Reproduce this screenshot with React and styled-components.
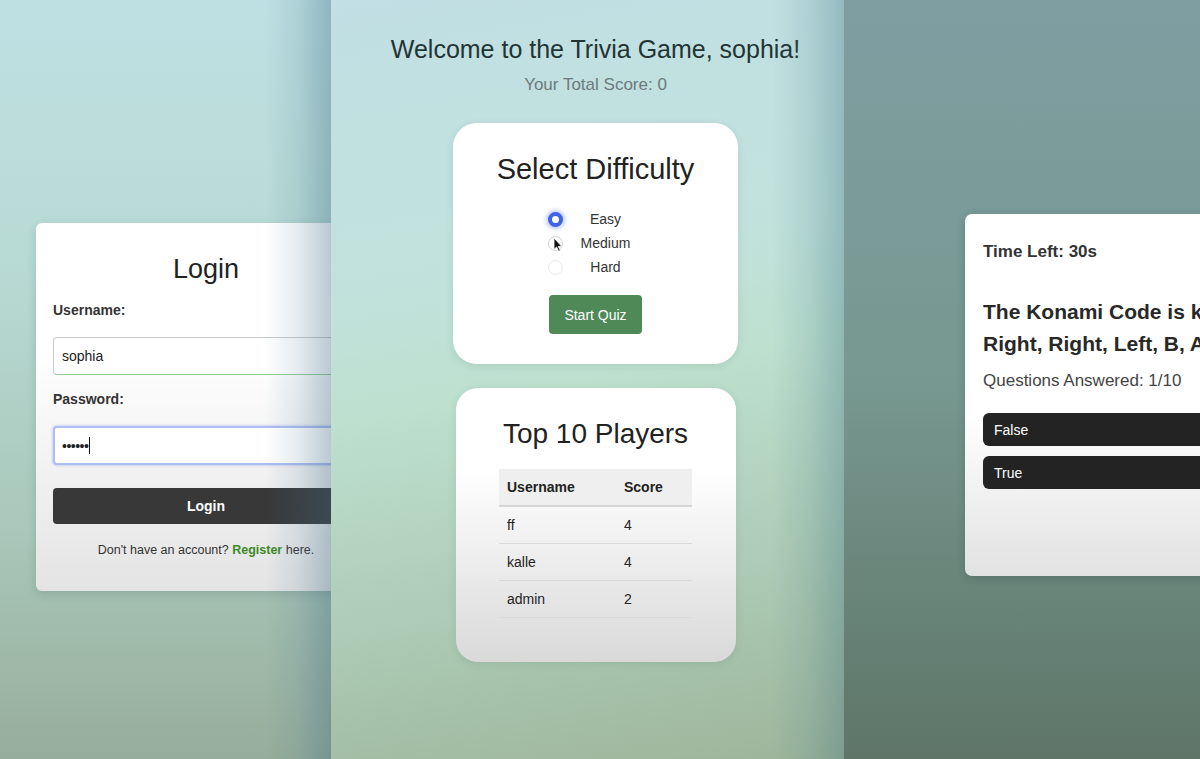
import React from "react";
import styled, { createGlobalStyle, css } from "styled-components";

const GlobalStyle = createGlobalStyle`
  html, body { margin: 0; padding: 0; }
  body {
    font-family: "Liberation Sans", Arial, Helvetica, sans-serif;
    background: #8aa9a6;
  }
  * { box-sizing: border-box; }
`;

const Stage = styled.div`
  display: flex;
  width: 1200px;
  height: 759px;
  overflow: hidden;
`;

const Panel = styled.section`
  position: relative;
  flex: 0 0 ${(p) => p.$width}px;
  height: 100%;
  overflow: hidden;
  display: flex;
  background: ${(p) => p.$bg};
  &::after {
    content: "";
    position: absolute;
    inset: 0;
    pointer-events: none;
    background: ${(p) => p.$shade || "none"};
  }
`;

const LoginPanel = styled(Panel)`
  align-items: flex-start;
  padding: 223px 0 0 36px;
`;

const GamePanel = styled(Panel)`
  flex-direction: column;
  align-items: center;
  padding: 34px 0 0 16px;
`;

const QuizPanel = styled(Panel)`
  align-items: flex-start;
  padding: 214px 0 0 121px;
`;

/* ---------- Login ---------- */
const LoginCard = styled.div`
  flex: 0 0 340px;
  display: flex;
  flex-direction: column;
  padding: 30px 17px 33px;
  border-radius: 6px;
  background: linear-gradient(180deg, #ffffff 35%, #e4e4e4 100%);
  box-shadow: 0 3px 10px rgba(40, 70, 70, 0.18);
`;

const CardTitle = styled.h1`
  margin: 0;
  font-size: ${(p) => p.$size}px;
  line-height: ${(p) => p.$lh}px;
  font-weight: 400;
  color: #222;
  text-align: center;
  white-space: nowrap;
`;

const FieldLabel = styled.div`
  margin-top: ${(p) => p.$top}px;
  font-size: 14px;
  line-height: 17px;
  font-weight: 700;
  color: #333;
`;

const TextField = styled.div`
  margin-top: 18px;
  height: ${(p) => (p.$focused ? 39 : 38)}px;
  display: flex;
  align-items: center;
  padding: 0 8px;
  font-size: 14px;
  color: #222;
  border-radius: 4px;
  background: #fff;
  ${(p) =>
    p.$focused
      ? css`
          border: 2px solid #aebdf2;
          padding-left: 7px;
          box-shadow: 0 0 3px rgba(120, 145, 235, 0.6);
        `
      : css`
          border: 1px solid #cacaca;
          border-bottom-color: #93cf93;
        `}
`;

const Dots = styled.span`
  font-size: 14px;
  letter-spacing: -0.5px;
  line-height: 1;
`;

const Caret = styled.span`
  display: inline-block;
  width: 1px;
  height: 17px;
  margin-left: 1px;
  background: #111;
`;

const DarkButton = styled.div`
  margin-top: 23px;
  height: 36px;
  display: flex;
  align-items: center;
  justify-content: center;
  border-radius: 4px;
  background: #383838;
  color: #fff;
  font-size: 14px;
  font-weight: 700;
`;

const FooterText = styled.p`
  margin: 18px 0 0;
  font-size: 12.5px;
  line-height: 16px;
  color: #333;
  text-align: center;
`;

const RegisterLink = styled.span`
  color: #3b8a25;
  font-weight: 700;
`;

/* ---------- Game ---------- */
const Welcome = styled.h1`
  margin: 0;
  font-size: 25px;
  line-height: 30px;
  font-weight: 400;
  color: #233434;
  white-space: nowrap;
`;

const ScoreText = styled.p`
  margin: 11px 0 0;
  font-size: 17px;
  line-height: 20px;
  color: #6b7b7b;
`;

const WhiteCard = styled.div`
  width: ${(p) => p.$width}px;
  margin-top: ${(p) => p.$top}px;
  display: flex;
  flex-direction: column;
  align-items: center;
  border-radius: ${(p) => p.$radius}px;
  padding: ${(p) => p.$pad};
  background: ${(p) => p.$bg};
  box-shadow: 0 2px 8px rgba(30, 60, 60, 0.1);
`;

const RadioList = styled.div`
  margin-top: 21px;
  display: flex;
  flex-direction: column;
`;

const RadioRow = styled.div`
  position: relative;
  display: flex;
  align-items: center;
  height: 24px;
  gap: 5px;
`;

const RadioDot = styled.span`
  flex: 0 0 15px;
  width: 15px;
  height: 15px;
  border-radius: 50%;
  ${(p) =>
    p.$checked
      ? css`
          background: #fff;
          border: 4px solid #3f63e6;
          box-shadow: 0 0 4px 2px rgba(90, 120, 240, 0.4);
        `
      : css`
          background: #fff;
          border: 1px solid ${p.$hover ? "#d2d2d2" : "#e8e8e8"};
        `}
`;

const RadioLabel = styled.span`
  width: 76px;
  text-align: center;
  font-size: 14px;
  line-height: 17px;
  color: #333;
`;

const Pointer = styled.svg`
  position: absolute;
  left: 5px;
  top: 6px;
  width: 10px;
  height: 15px;
`;

const StartButton = styled.div`
  margin-top: 16px;
  width: 93px;
  height: 39px;
  display: flex;
  align-items: center;
  justify-content: center;
  border-radius: 4px;
  background: #4e8957;
  color: #fff;
  font-size: 14px;
`;

const Table = styled.table`
  margin-top: 19px;
  width: 193px;
  border-collapse: collapse;
  font-size: 14px;
  color: #222;
`;

const HeadCell = styled.th`
  height: 37px;
  padding: 0 8px;
  text-align: left;
  font-weight: 700;
  background: #efefef;
  border-bottom: 2px solid #d5d5d5;
  width: ${(p) => p.$w || "auto"};
`;

const Cell = styled.td`
  height: 37px;
  padding: 0 8px;
  border-bottom: 1px solid #dadada;
`;

/* ---------- Quiz ---------- */
const QuizCard = styled.div`
  flex: 0 0 600px;
  display: flex;
  flex-direction: column;
  padding: 28px 18px 87px;
  border-radius: 7px;
  background: linear-gradient(180deg, #ffffff 55%, #e2e2e2 100%);
  box-shadow: 0 2px 8px rgba(20, 40, 40, 0.2);
`;

const TimeLeft = styled.div`
  font-size: 17px;
  line-height: 20px;
  font-weight: 700;
  color: #333;
`;

const Question = styled.h2`
  margin: 34px 0 0;
  font-size: 21px;
  line-height: 32px;
  font-weight: 700;
  color: #282828;
  white-space: nowrap;
`;

const Progress = styled.p`
  margin: 11px 0 0;
  font-size: 17px;
  line-height: 20px;
  color: #444;
`;

const AnswerButton = styled.div`
  margin-top: ${(p) => p.$top}px;
  height: 33px;
  display: flex;
  align-items: center;
  padding-left: 11px;
  border-radius: 6px;
  background: #232323;
  color: #fff;
  font-size: 14px;
`;

const players = [
  { name: "ff", score: 4 },
  { name: "kalle", score: 4 },
  { name: "admin", score: 2 },
];

export default function App() {
  return (
    <>
      <GlobalStyle />
      <Stage>
        <LoginPanel
          $width={331}
          $bg="linear-gradient(180deg, #bfe0e3 0%, #b8dad4 35%, #a9c7ba 70%, #97ad9b 100%)"
          $shade="linear-gradient(90deg, rgba(80,125,150,0) 0%, rgba(80,125,150,0) 80%, rgba(75,120,145,0.14) 90%, rgba(60,105,130,0.36) 100%)"
        >
          <LoginCard>
            <CardTitle $size={27} $lh={32}>Login</CardTitle>
            <FieldLabel $top={17}>Username:</FieldLabel>
            <TextField>sophia</TextField>
            <FieldLabel $top={16}>Password:</FieldLabel>
            <TextField $focused>
              <Dots>••••••</Dots>
              <Caret />
            </TextField>
            <DarkButton>Login</DarkButton>
            <FooterText>
              Don't have an account? <RegisterLink>Register</RegisterLink> here.
            </FooterText>
          </LoginCard>
        </LoginPanel>

        <GamePanel
          $width={513}
          $bg="linear-gradient(170deg, #c1dfe4 0%, #c1e2dc 35%, #bde0cf 50%, #adcbb6 75%, #9db59a 100%)"
          $shade="linear-gradient(90deg, rgba(70,120,135,0) 0%, rgba(70,120,135,0) 86%, rgba(70,120,135,0.14) 93%, rgba(60,110,125,0.34) 100%)"
        >
          <Welcome>Welcome to the Trivia Game, sophia!</Welcome>
          <ScoreText>Your Total Score: 0</ScoreText>

          <WhiteCard $width={285} $top={28} $radius={24} $pad="29px 0 30px" $bg="#ffffff">
            <CardTitle $size={29} $lh={34}>Select Difficulty</CardTitle>
            <RadioList>
              <RadioRow>
                <RadioDot $checked />
                <RadioLabel>Easy</RadioLabel>
              </RadioRow>
              <RadioRow>
                <RadioDot $hover />
                <RadioLabel>Medium</RadioLabel>
                <Pointer viewBox="0 0 10 15">
                  <path d="M1 1 L1 12.5 L3.6 10 L5.6 14.3 L7.3 13.5 L5.3 9.4 L8.8 9.4 Z" fill="#111" stroke="#fff" strokeWidth="0.8" strokeLinejoin="round" />
                </Pointer>
              </RadioRow>
              <RadioRow>
                <RadioDot />
                <RadioLabel>Hard</RadioLabel>
              </RadioRow>
            </RadioList>
            <StartButton>Start Quiz</StartButton>
          </WhiteCard>

          <WhiteCard
            $width={280}
            $top={24}
            $radius={22}
            $pad="30px 0 44px"
            $bg="linear-gradient(180deg, #ffffff 30%, #d9d9d9 100%)"
          >
            <CardTitle $size={28} $lh={32}>Top 10 Players</CardTitle>
            <Table>
              <thead>
                <tr>
                  <HeadCell $w="117px">Username</HeadCell>
                  <HeadCell>Score</HeadCell>
                </tr>
              </thead>
              <tbody>
                {players.map((p) => (
                  <tr key={p.name}>
                    <Cell>{p.name}</Cell>
                    <Cell>{p.score}</Cell>
                  </tr>
                ))}
              </tbody>
            </Table>
          </WhiteCard>
        </GamePanel>

        <QuizPanel
          $width={356}
          $bg="linear-gradient(180deg, #7f9ea2 0%, #779890 50%, #5e7568 100%)"
        >
          <QuizCard>
            <TimeLeft>Time Left: 30s</TimeLeft>
            <Question>
              The Konami Code is known as Up, Up, Down, Down, Left,
              <br />
              Right, Right, Left, B, A, Start.
            </Question>
            <Progress>Questions Answered: 1/10</Progress>
            <AnswerButton $top={22}>False</AnswerButton>
            <AnswerButton $top={10}>True</AnswerButton>
          </QuizCard>
        </QuizPanel>
      </Stage>
    </>
  );
}
